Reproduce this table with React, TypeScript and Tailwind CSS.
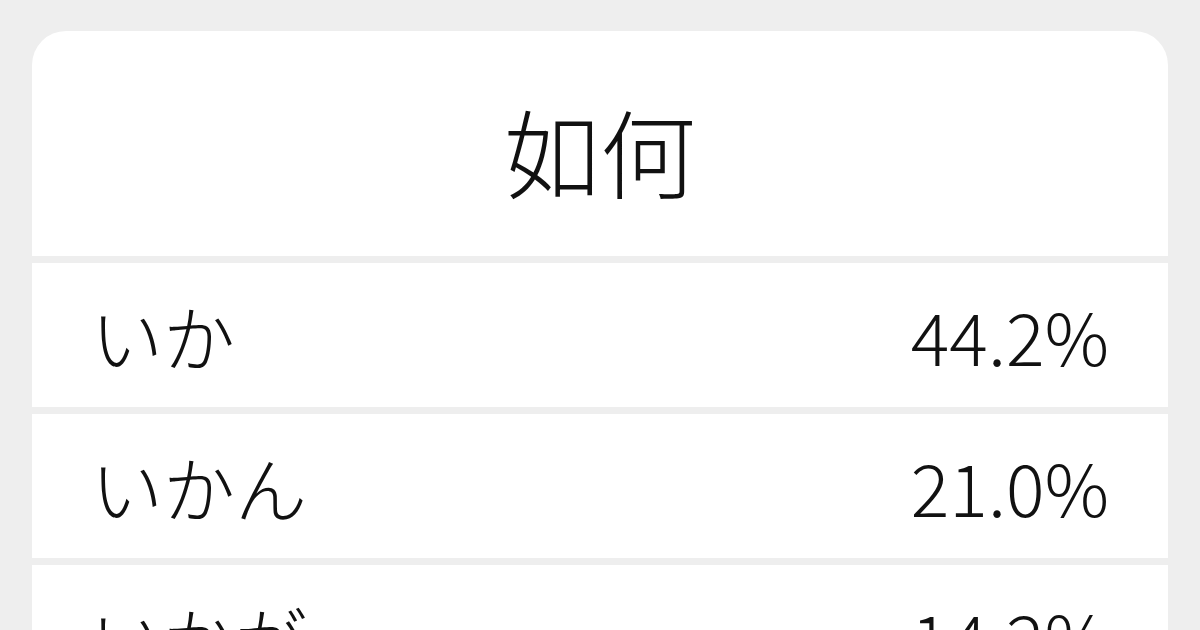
const rows = [
  { reading: 'いか', pct: '44.2%' },
  { reading: 'いかん', pct: '21.0%' },
  { reading: 'いかが', pct: '14.2%' },
]

export default function App() {
  return (
    <div
      className="w-[1200px] h-[630px] overflow-hidden bg-[#eeeeee] pt-[31px] px-[32px] text-[#111111] font-light"
      style={{ fontFamily: '"Noto Sans CJK JP", "Noto Sans", sans-serif' }}
    >
      <div className="rounded-t-[34px] overflow-hidden flex flex-col gap-[7px]">
        <div className="h-[225px] bg-white flex items-center justify-center">
          <span className="text-[96px] leading-none mt-[12px]">如何</span>
        </div>
        {rows.map((r) => (
          <div key={r.reading} className="h-[144px] bg-white flex items-center justify-between pl-[59px] pr-[59px]">
            <span className="text-[72px] leading-none">{r.reading}</span>
            <span className="text-[72px] leading-none">{r.pct}</span>
          </div>
        ))}
      </div>
    </div>
  )
}
